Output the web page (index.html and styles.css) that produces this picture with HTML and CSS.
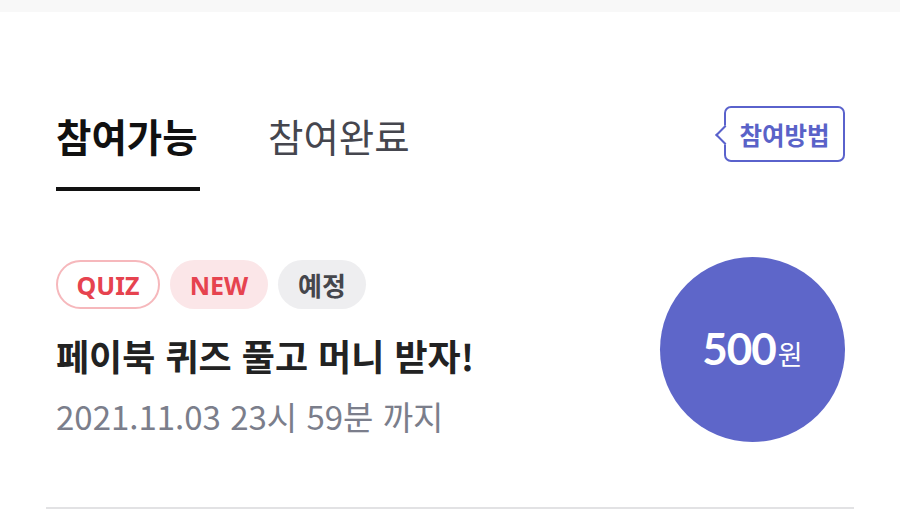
FILE: index.html
```html
<!DOCTYPE html>
<html lang="ko">
<head>
<meta charset="utf-8">
<link rel="stylesheet" href="styles.css">
</head>
<body>
<div class="topband"></div>
<main class="page">
  <div class="tabs-row">
    <nav class="tabs">
      <span class="tab tab-active">참여가능</span>
      <span class="tab">참여완료</span>
    </nav>
    <button class="howto">참여방법</button>
  </div>
  <section class="item">
    <div class="item-info">
      <div class="badges">
        <span class="badge badge-quiz">QUIZ</span>
        <span class="badge badge-new">NEW</span>
        <span class="badge badge-plan">예정</span>
      </div>
      <h2 class="title">페이북 퀴즈 풀고 머니 받자!</h2>
      <p class="date">2021.11.03 23시 59분 까지</p>
    </div>
    <div class="reward"><span class="amount">500</span><span class="unit">원</span></div>
  </section>
</main>
</body>
</html>
```
FILE: styles.css
```css
* { box-sizing: border-box; }
body {
  margin: 0;
  background: #fff;
  font-family: "Noto Sans CJK KR", "Noto Sans", sans-serif;
  width: 900px;
  height: 510px;
  overflow: hidden;
}
.topband { height: 12px; background: #f8f8f8; }
.page { margin: 0 46px; border-bottom: 2px solid #e2e2e4; }
.tabs-row {
  display: flex;
  justify-content: space-between;
  align-items: flex-start;
  padding: 94px 9px 0 10px;
}
.tabs { display: flex; gap: 68px; padding-top: 8px; }
.tab {
  display: block;
  font-size: 38.5px;
  line-height: 43px;
  color: #45464e;
  padding-bottom: 30px;
  border-bottom: 4px solid transparent;
  width: 144px;
  white-space: nowrap;
}
.tab-active { font-weight: 700; color: #111; border-bottom-color: #111; }
.howto {
  position: relative;
  width: 121px;
  height: 56px;
  border: 2px solid #5a62cc;
  border-radius: 7px;
  background: #fff;
  color: #5a62c8;
  font-family: inherit;
  font-size: 24.5px;
  font-weight: 700;
  padding: 0;
  white-space: nowrap;
}
.howto::before {
  content: "";
  position: absolute;
  left: -8px;
  top: 50%;
  width: 12px;
  height: 12px;
  margin-top: -6px;
  background: #fff;
  border-left: 2px solid #5a62cc;
  border-bottom: 2px solid #5a62cc;
  transform: rotate(45deg);
}
.item {
  display: flex;
  justify-content: space-between;
  align-items: flex-start;
  padding: 69px 9px 70px 10px;
}
.badges { display: flex; gap: 10px; }
.badge {
  height: 49px;
  border-radius: 25px;
  display: flex;
  align-items: center;
  justify-content: center;
  font-size: 25px;
  font-weight: 700;
}
.badge-quiz { width: 104px; border: 2px solid #f6b8bc; color: #e6434f; font-family: "Noto Sans", sans-serif; }
.badge-new { width: 98px; background: #fbe6e8; color: #e6434f; font-family: "Noto Sans", sans-serif; }
.badge-plan { width: 88px; background: #eeeef0; color: #45464c; font-size: 26px; }
.title {
  margin: 24px 0 0;
  font-size: 36px;
  line-height: 44px;
  font-weight: 700;
  color: #222;
  white-space: nowrap;
}
.date {
  margin: 18px 0 0;
  font-size: 33px;
  line-height: 42px;
  color: #7b7e8b;
  white-space: nowrap;
}
.reward {
  width: 185px;
  height: 185px;
  margin: -3px 0 -5px;
  border-radius: 50%;
  background: #5e66c9;
  color: #fff;
  display: flex;
  align-items: baseline;
  justify-content: center;
  padding-top: 66px;
}
.amount { font-family: Lato, sans-serif; font-weight: 700; font-size: 44px; line-height: 50px; letter-spacing: -1px; }
.unit { font-size: 27px; margin-left: 2px; }
```
